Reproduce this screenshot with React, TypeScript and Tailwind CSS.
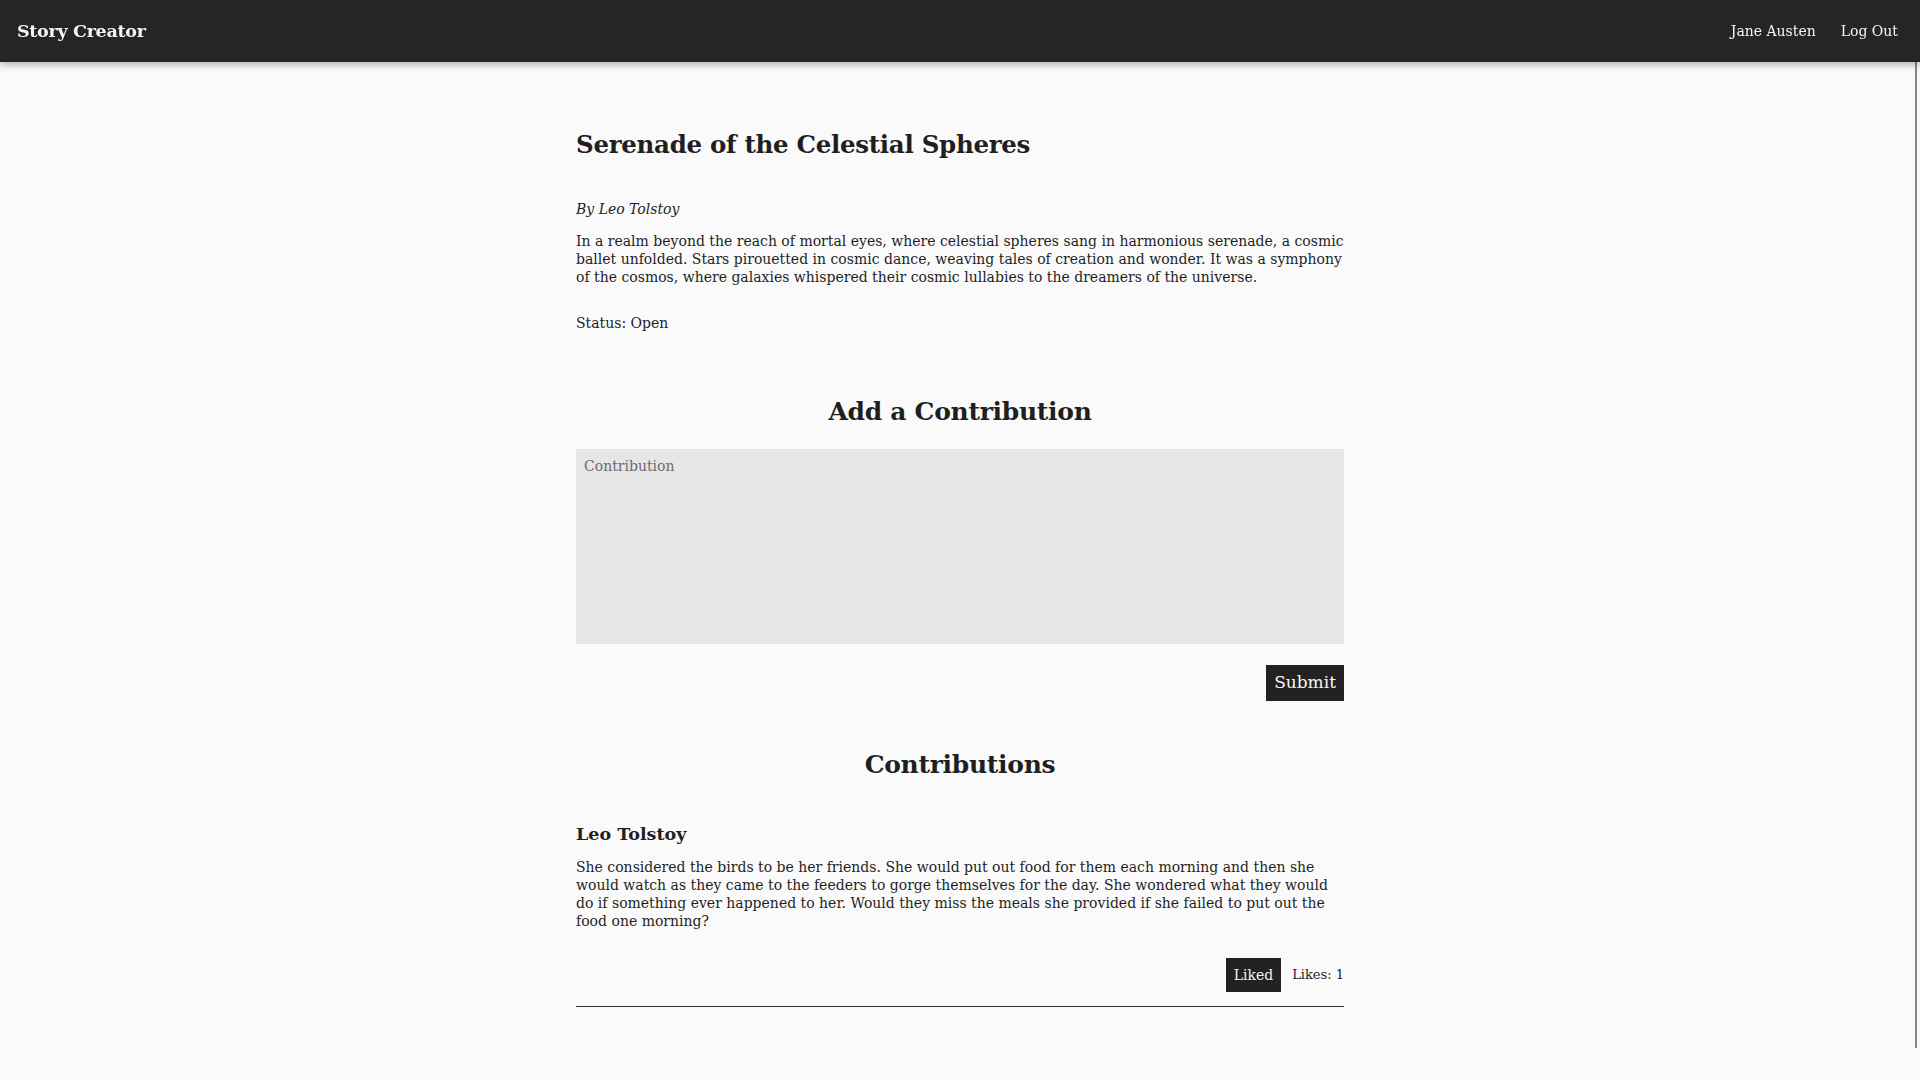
import React from "react";

const story = {
  title: "Serenade of the Celestial Spheres",
  author: "Leo Tolstoy",
  body: "In a realm beyond the reach of mortal eyes, where celestial spheres sang in harmonious serenade, a cosmic ballet unfolded. Stars pirouetted in cosmic dance, weaving tales of creation and wonder. It was a symphony of the cosmos, where galaxies whispered their cosmic lullabies to the dreamers of the universe.",
  status: "Open",
};

const contributions = [
  {
    author: "Leo Tolstoy",
    text: "She considered the birds to be her friends. She would put out food for them each morning and then she would watch as they came to the feeders to gorge themselves for the day. She wondered what they would do if something ever happened to her. Would they miss the meals she provided if she failed to put out the food one morning?",
    likes: 1,
  },
];

const Navbar = () => (
  <nav className="relative z-10 flex h-[62px] items-center justify-between bg-[#252525] px-[17px] text-[#f5f5f5] shadow-[0_2px_8px_rgba(0,0,0,0.35)]">
    <span className="text-[17.5px] font-bold tracking-[-0.3px]">Story Creator</span>
    <div className="flex items-center gap-[25px] pr-[5px] text-[14px]">
      <span>Jane Austen</span>
      <span>Log Out</span>
    </div>
  </nav>
);

export default function App() {
  return (
    <div
      className="min-h-screen bg-[#fafafa] text-[#1f1f1f]"
      style={{ fontFamily: '"DejaVu Serif", "Liberation Serif", serif' }}
    >
      <Navbar />

      <main className="mx-auto w-[768px] pt-[67px] pb-[60px]">
        {/* Story */}
        <h1 className="text-[24.5px] font-bold leading-[32px] tracking-[-0.3px]">{story.title}</h1>
        <p className="mt-[39px] text-[14px] italic leading-[18px]">By {story.author}</p>
        <p className="mt-[14px] text-[14px] leading-[18px]">{story.body}</p>
        <p className="mt-[28px] text-[14px] leading-[18px]">Status: {story.status}</p>

        {/* New contribution */}
        <h2 className="mt-[64px] text-center text-[25px] font-bold leading-[32px] tracking-[-0.3px]">
          Add a Contribution
        </h2>
        <textarea
          placeholder="Contribution"
          className="mt-[21px] block h-[195px] w-full resize-none bg-[#e6e6e6] px-[8px] py-[8px] text-[14px] leading-[18px] text-[#222] outline-none placeholder:text-[#6b6b6b]"
        />
        <div className="mt-[21px] flex justify-end">
          <button className="h-[36px] bg-[#222] px-[8px] text-[17px] text-[#f5f5f5]">Submit</button>
        </div>

        {/* Contributions */}
        <h2 className="mt-[48px] text-center text-[25px] font-bold leading-[32px] tracking-[-0.3px]">
          Contributions
        </h2>
        {contributions.map((c, i) => (
          <article key={i} className="mt-[41px] border-b-[1.5px] border-[#333] pb-[14px]">
            <h3 className="text-[17.5px] font-bold leading-[24px]">{c.author}</h3>
            <p className="mt-[12px] text-[14px] leading-[18px]">{c.text}</p>
            <div className="mt-[28px] flex items-center justify-end gap-[11px]">
              <button className="h-[34px] bg-[#222] px-[8px] text-[14px] text-[#f5f5f5]">Liked</button>
              <span className="text-[13px]">Likes: {c.likes}</span>
            </div>
          </article>
        ))}
      </main>

      <div className="pointer-events-none fixed right-[3px] top-[15px] h-[1033px] w-[2px] bg-[#888]" />
    </div>
  );
}
